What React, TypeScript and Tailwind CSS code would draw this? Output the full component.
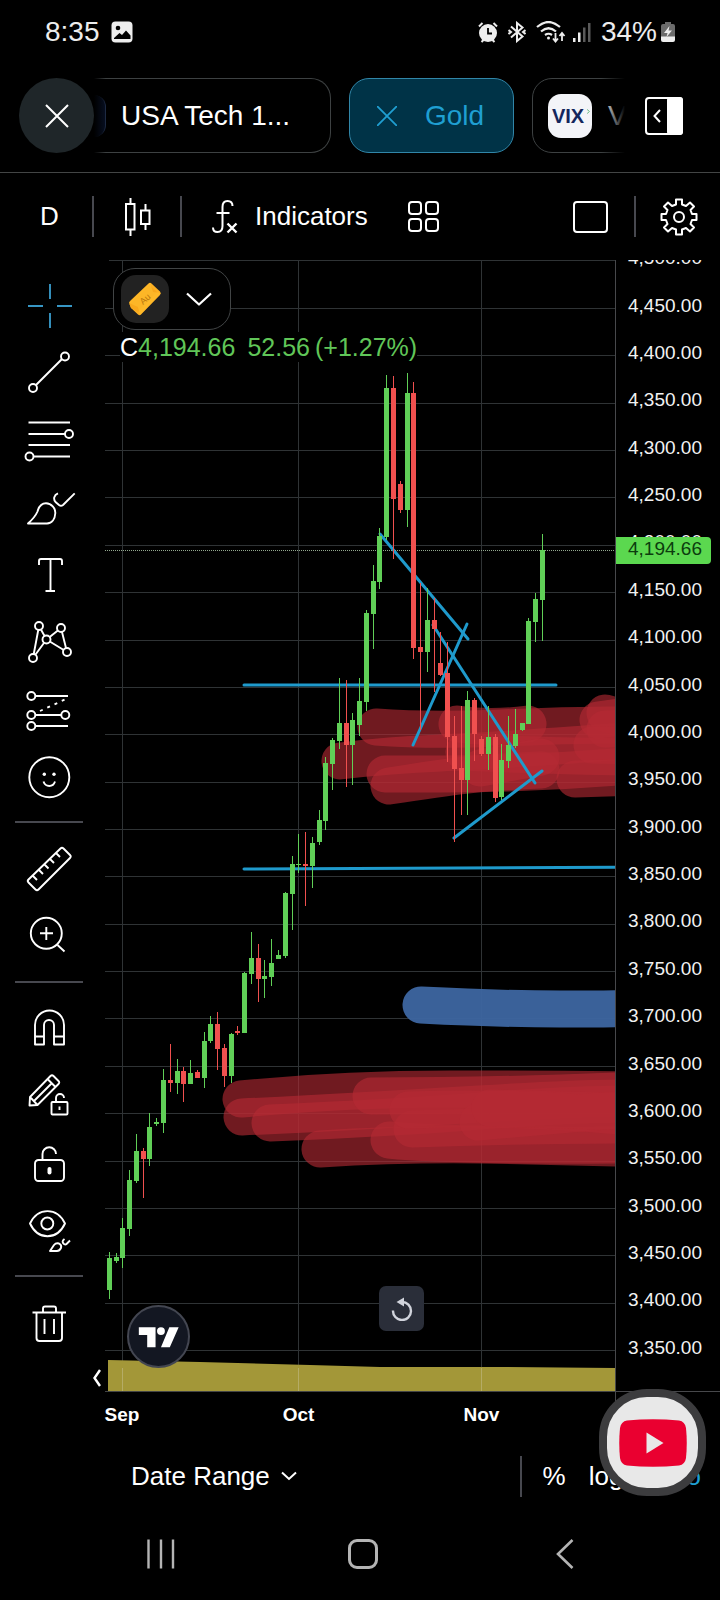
import type { ReactNode } from "react"
import { clsx } from "clsx"

type Candle = [x: number, open: number, close: number, high: number, low: number, up: 0 | 1]

// x centre, body top, body bottom, wick top, wick bottom, up/down
const candles: Candle[] = [
    [109, 1258, 1290, 1252, 1299, 1],
    [116, 1257, 1261, 1253, 1263, 1],
    [122, 1228, 1258, 1218, 1268, 1],
    [129, 1180, 1229, 1170, 1236, 1],
    [136, 1151, 1181, 1134, 1183, 1],
    [143, 1151, 1159, 1148, 1198, 0],
    [149, 1127, 1159, 1113, 1166, 1],
    [156, 1122, 1124, 1118, 1126, 1],
    [163, 1080, 1123, 1069, 1133, 1],
    [170, 1080, 1083, 1044, 1092, 0],
    [177, 1071, 1083, 1059, 1094, 1],
    [183, 1071, 1084, 1067, 1102, 0],
    [190, 1073, 1084, 1060, 1084, 1],
    [197, 1072, 1078, 1070, 1078, 0],
    [204, 1041, 1078, 1032, 1088, 1],
    [210, 1024, 1041, 1016, 1043, 1],
    [217, 1024, 1049, 1012, 1070, 0],
    [224, 1048, 1076, 1044, 1087, 0],
    [231, 1034, 1076, 1033, 1083, 1],
    [237, 1031, 1033, 1026, 1035, 0],
    [244, 973, 1033, 972, 1033, 1],
    [251, 958, 974, 932, 984, 1],
    [258, 958, 979, 944, 1002, 0],
    [264, 976, 979, 960, 998, 1],
    [271, 963, 977, 939, 986, 1],
    [278, 955, 959, 950, 959, 1],
    [285, 893, 956, 892, 958, 1],
    [292, 864, 894, 856, 930, 1],
    [298, 864, 865, 834, 873, 1],
    [305, 864, 866, 832, 906, 0],
    [312, 843, 866, 837, 888, 1],
    [319, 820, 842, 810, 845, 1],
    [325, 763, 821, 757, 830, 1],
    [332, 740, 764, 738, 790, 1],
    [339, 723, 741, 678, 749, 1],
    [346, 723, 745, 680, 787, 0],
    [352, 720, 745, 713, 785, 1],
    [359, 701, 725, 678, 736, 1],
    [366, 613, 702, 610, 711, 1],
    [373, 581, 614, 565, 649, 1],
    [379, 536, 582, 528, 589, 1],
    [386, 388, 537, 375, 540, 1],
    [393, 388, 499, 376, 559, 0],
    [400, 484, 510, 481, 513, 0],
    [407, 393, 510, 373, 527, 1],
    [413, 393, 648, 382, 659, 0],
    [420, 647, 652, 583, 730, 0],
    [427, 620, 652, 588, 672, 1],
    [434, 620, 629, 598, 692, 0],
    [440, 663, 675, 632, 676, 0],
    [447, 673, 737, 642, 762, 0],
    [454, 736, 769, 716, 842, 0],
    [461, 768, 780, 706, 815, 0],
    [467, 700, 780, 691, 815, 1],
    [474, 700, 734, 698, 761, 0],
    [481, 739, 754, 736, 756, 0],
    [488, 737, 754, 706, 770, 1],
    [495, 737, 798, 734, 802, 0],
    [501, 760, 797, 744, 800, 1],
    [508, 745, 761, 716, 768, 1],
    [515, 734, 746, 709, 748, 1],
    [522, 723, 730, 723, 731, 1],
    [528, 621, 724, 618, 724, 1],
    [535, 599, 622, 593, 642, 1],
    [542, 550, 600, 534, 641, 1],
]

const redZones = [
    "M376 727 Q430 731 500 728 T640 725",
    "M340 761 Q390 755 440 753 T640 740",
    "M385 774 H440 Q540 774 640 765",
    "M389 786 Q440 778 467 775 T541 770",
    "M464 752 Q540 756 640 757",
    "M457 724 Q490 729 528 724",
    "M480 768 L541 757",
    "M598 720 L640 714",
    "M605 713 L640 722",
    "M605 729 L640 727",
    "M592 745 L640 746",
    "M575 779 L640 777",
    "M241 1099 Q340 1089 450 1089 T640 1090",
    "M242 1117 Q350 1112 480 1104 T640 1099",
    "M270 1123 Q390 1118 480 1111 T640 1104",
    "M371 1096 Q500 1096 640 1090",
    "M320 1149 Q400 1144 480 1145 T640 1149",
    "M389 1140 Q450 1146 640 1145",
    "M412 1129 Q520 1125 640 1125",
    "M408 1110 Q520 1106 640 1118",
    "M478 1122 L640 1108",
    "M490 1108 L640 1112",
]

const trendLines = [
    "M244 685 L556 685",
    "M244 869 L640 867",
    "M380 534 L468 639",
    "M467 624 L413 745",
    "M433 625 L535 783",
    "M454 838 L542 771",
]

const GRID_TOP = 308
const GRID_BOTTOM = 1350
const gridRows = Array.from({ length: 23 }, (_, i) => Math.round(GRID_TOP + (i * (GRID_BOTTOM - GRID_TOP)) / 22))
const gridCols = [122, 298, 481]

const prices = Array.from({ length: 24 }, (_, i) =>
    (4500 - i * 50).toLocaleString("en-US", { minimumFractionDigits: 2 })
)

const Dot = ({ x, y }: { x: number; y: number }) => <circle cx={x} cy={y} r="4" fill="#000" />

const tools: { label: string; icon: ReactNode; blue?: boolean }[][] = [
    [
        { label: "Crosshair", blue: true, icon: <path d="M31 11V26M31 40V55M9 33H24M38 33H53" /> },
        { label: "Trend line", icon: <><path d="M14 48L46 16" /><Dot x={46} y={16.5} /><Dot x={14} y={48} /></> },
        {
            label: "Fib retracement",
            icon: <><path d="M9.500 15.500H51M9.500 27H50M9.500 38H51M10 49.500H51" /><Dot x={50} y={27} /><Dot x={10.5} y={49.5} /></>,
        },
        {
            label: "Brush",
            icon: (
                <path d="M9 49.500C14 45 17 41 18.500 37.500C20 32 23 29.300 27 29.300A9.500 9.500 0 0 1 36.300 39.300C36 45 33 49.300 28 49.500ZM39 19.300C35 21 34 25 36.500 28L40 31Q42 32.500 44 31L55.700 19.300" />
            ),
        },
        { label: "Text", icon: <path d="M20 24V20Q20 18 22 18H41Q43 18 43 20V24M31.500 18V50M26.500 50H36" /> },
        {
            label: "Patterns",
            icon: (
                <>
                    <path d="M14 50L20 18L27.500 31.500ZM27.500 31.500L42 20L48 44Z" />
                    <Dot x={20} y={18} /><Dot x={42} y={20} /><Dot x={27.5} y={31.5} /><Dot x={14} y={50} /><Dot x={48} y={44} />
                </>
            ),
        },
        {
            label: "Forecast",
            icon: (
                <>
                    <path d="M12 21H49M12 40H46M12 51H49" />
                    <path d="M21 36L47 24" strokeDasharray="3 5" />
                    <Dot x={12.3} y={21} /><Dot x={12.3} y={40} /><Dot x={46.3} y={40} /><Dot x={12.3} y={51} />
                </>
            ),
        },
        {
            label: "Emoji",
            icon: (
                <>
                    <circle cx="30.300" cy="35.300" r="20" />
                    <path d="M24.500 39.500Q26 44 30.300 44T36 39.500" />
                    <circle cx="25.300" cy="32.300" r="1.700" fill="#fff" stroke="none" />
                    <circle cx="35" cy="32.300" r="1.700" fill="#fff" stroke="none" />
                </>
            ),
        },
    ],
    [
        {
            label: "Measure",
            icon: (
                <path d="M41.500 13.500Q43 12 44.500 13.500L51 20Q52.500 21.500 51 23L19.500 54.500Q18 56 16.500 54.500L9.500 47.500Q8 46 9.500 44.500ZM14 41L18 45M20 35L24 39M25.500 29.500L29.500 33.500M31 24L35 28M37 18L41 22" />
            ),
        },
        {
            label: "Zoom in",
            icon: <><circle cx="27.300" cy="31.300" r="15.500" /><path d="M38.500 43L45.500 49.500M21 31.300H34M27.300 25V38" /></>,
        },
    ],
    [
        {
            label: "Magnet",
            icon: <path d="M16 49.500V30A14.500 14.500 0 0 1 45 30V49.500H35V30A5 5 0 0 0 25 30V49.500ZM16 41.500H25M35 41.500H45" />,
        },
        {
            label: "Keep drawing",
            icon: (
                <>
                    <path d="M10.500 43.500L11 35L31.500 14Q33 12.500 34.500 14L39.500 19Q41 20.500 39.500 22L18.500 43ZM11 35L18.500 43M28.500 17L36.500 25M15 39L32.500 21.500" />
                    <rect x="32.500" y="40" width="16" height="12.500" rx="1" />
                    <path d="M37 40V36A4 4 0 0 1 45 36M40.500 44.500V48" />
                </>
            ),
        },
        {
            label: "Lock drawings",
            icon: (
                <>
                    <rect x="16" y="31" width="29" height="21" rx="3.500" />
                    <path d="M23.500 31V25A6.500 6.500 0 0 1 37 25" />
                    <rect x="28.500" y="38" width="4" height="7.500" rx="2" fill="#fff" stroke="none" />
                </>
            ),
        },
        {
            label: "Hide drawings",
            icon: (
                <>
                    <path d="M11 27.500C19 11 38 11 46 27.500C38 44.500 19 44.500 11 27.500Z" />
                    <circle cx="28.300" cy="27.500" r="6" />
                    <path d="M31 55L35 49Q37 46.500 40 47.500Q43 49 42 52Q40.500 55 38 55ZM45.500 43Q42 45.500 45 48Q46.500 49 47.500 48L51 44.500" />
                </>
            ),
        },
    ],
    [
        {
            label: "Remove",
            icon: (
                <path d="M13.500 23.500H47M24 23V19.500Q24 17.500 26 17.500H35Q37 17.500 37 19.500V23M17.500 24V49Q17.500 52 20.500 52H40Q43 52 43 49V24M25.500 30V45M35 30V45" />
            ),
        },
    ],
]

function StatusBar() {
    return (
        <header className="flex h-[64px] items-center pl-[45px] pr-[45px] text-[28px] text-[#ededed]">
            <span>8:35</span>
            <svg viewBox="0 0 22 22" className="ml-[11px] size-[22px]">
                <rect x="0.500" y="0.500" width="21" height="21" rx="4" fill="#ededed" />
                <circle cx="7" cy="7" r="2.300" fill="#000" />
                <path d="M3 17L8.500 12L11 14L15 9.500L19.500 14.500V18H3Z" fill="#000" />
            </svg>

            <svg viewBox="0 0 20 22" className="ml-auto h-[22px] w-[20px]">
                <circle cx="10" cy="12" r="9" fill="#ededed" />
                <path d="M1 5.500L4.500 2M19 5.500L15.500 2M3.500 21L6 18.500M16.500 21L14 18.500" stroke="#ededed" strokeWidth="2" />
                <path d="M10 7V12.500H14" stroke="#000" strokeWidth="1.800" fill="none" />
            </svg>
            <svg viewBox="0 0 18 22" className="ml-[10px] h-[22px] w-[18px]" fill="none" stroke="#ededed" strokeWidth="2">
                <path d="M3 5.500L14.500 15.500L9 20V2L14.500 6.500L3 16.500M0.500 9L3 11L0.500 13M17.500 9L15 11L17.500 13" />
            </svg>
            <svg viewBox="0 0 30 22" className="ml-[10px] h-[22px] w-[30px]" fill="none" stroke="#ededed" strokeWidth="2.200">
                <path d="M1 6Q12.500 -4 24 6M5 10.500Q12.500 4 20 10.500M9 14Q12.500 11.500 16 14" />
                <circle cx="12.500" cy="17" r="1.500" fill="#ededed" stroke="none" />
                <path d="M19.500 12V20M17 17.500L19.500 20.500L22 17.500M26 20V12.500M23.500 15L26 12L28.500 15" strokeWidth="1.800" />
            </svg>
            <svg viewBox="0 0 19 22" className="ml-[6px] h-[22px] w-[19px]">
                <path d="M1 17H3.500V21H1ZM6 11.500H8.500V21H6Z" fill="#ededed" />
                <path d="M11 6.500H13.500V21H11ZM16 2H18.500V21H16Z" fill="#5a5a5a" />
            </svg>
            <span className="ml-[10px]">34%</span>
            <svg viewBox="0 0 14 20" className="ml-1 h-[20px] w-[14px]">
                <path d="M4 0H10V2H12Q14 2 14 4V15H0V4Q0 2 2 2H4Z" fill="#6b6b6b" />
                <path d="M0 14.500H14V18Q14 20 12 20H2Q0 20 0 18Z" fill="#ededed" />
                <path d="M8.500 4L3 11H6.500L5.500 15L11 8.500H7.500Z" fill="#ededed" />
            </svg>
        </header>
    )
}

function SymbolTabs() {
    return (
        <div className="flex h-[109px] items-start border-b border-[#434545] pl-[19px] pr-[37px] pt-[14px] text-[28px]">
            <button aria-label="Close" className="flex size-[75px] shrink-0 items-center justify-center rounded-full bg-[#1f2629]">
                <svg viewBox="0 0 24 24" className="size-[24px]" stroke="#fff" strokeWidth="2">
                    <path d="M1 1L23 23M23 1L1 23" />
                </svg>
            </button>

            <div className="relative mr-[20px] flex min-w-0 flex-1 gap-[18px] overflow-hidden">
                <button className="flex h-[75px] w-[237px] shrink-0 items-center rounded-r-[20px] border border-l-0 border-[#3d4142]">
                    <span className="h-[42px] w-[12px] rounded-r-[12px] border-r border-[#1f2c45] bg-[#070f22]" />
                    <span className="ml-[15px]">USA Tech 1...</span>
                </button>
                <button className="flex h-[75px] w-[165px] shrink-0 items-center rounded-[20px] border border-[#3186a8] bg-[#003347] text-[#1f9fd2]">
                    <svg viewBox="0 0 20 20" className="ml-[27px] size-[20px]" stroke="currentColor" strokeWidth="1.800">
                        <path d="M0 0L20 20M20 0L0 20" />
                    </svg>
                    <span className="ml-[28px]">Gold</span>
                </button>
                <button className="flex h-[75px] w-[170px] shrink-0 items-center rounded-[20px] border border-[#3d4142]">
                    <span className="relative ml-[15px] flex size-[44px] items-center justify-center rounded-[13px] bg-[#f3f4f8] pr-1 text-[20px] font-bold text-[#13265c]">
                        VIX
                        <svg viewBox="0 0 4 6" className="absolute right-[2px] top-[15px] h-[5px] w-[3px]" fill="none" stroke="#2aa34c">
                            <path d="M0 0L3 3L0 6" />
                        </svg>
                    </span>
                    <span className="ml-4">VIX</span>
                </button>
                <div className="pointer-events-none absolute inset-y-0 left-0 w-3 bg-gradient-to-r from-black to-transparent" />
                <div className="pointer-events-none absolute inset-y-0 right-0 w-6 bg-gradient-to-l from-black to-transparent" />
            </div>

            <button aria-label="Toggle panel" className="mt-[19px] shrink-0">
                <svg viewBox="0 0 38 38" className="size-[38px]" fill="none" stroke="#fff" strokeWidth="2">
                    <rect x="1" y="1" width="36" height="36" rx="3" />
                    <rect x="23" y="1" width="14" height="36" rx="2" fill="#fff" />
                    <path d="M15 13L9.500 19L15 25" />
                </svg>
            </button>
        </div>
    )
}

function ToolbarDivider() {
    return <span className="h-[41px] w-[2px] shrink-0 bg-[#47484f]" />
}

function Toolbar() {
    return (
        <div className="flex h-[87px] items-center text-[26px]">
            <button className="w-[92px] pl-[7px] text-center">D</button>
            <ToolbarDivider />
            <button aria-label="Chart type" className="flex w-[86px] justify-center pl-[2px]">
                <svg viewBox="0 0 26 38" className="h-[38px] w-[26px]" fill="none" stroke="#fff" strokeWidth="2">
                    <path d="M1 6H9.500V31.500H1ZM5.500 0V6M5.500 31.500V38M16 12.500H24.500V26H16ZM20.500 6V12.500M20.500 26V32" />
                </svg>
            </button>
            <ToolbarDivider />
            <button className="ml-[30px] flex items-center">
                <svg viewBox="0 0 26 34" className="mr-[17px] h-[34px] w-[26px]" fill="none" stroke="#fff" strokeWidth="2">
                    <path d="M20.500 6Q20.500 1 15.500 1Q10.500 1 10.500 7V26Q10.500 32 5.500 32Q1 32 1 27.500M4.500 13H17.500" />
                    <path d="M15.500 23.500L24.500 32.500M24.500 23.500L15.500 32.500" strokeWidth="2.400" />
                </svg>
                Indicators
            </button>
            <button aria-label="Templates" className="ml-[40px]">
                <svg viewBox="0 0 32 32" className="size-[32px]" fill="none" stroke="#fff" strokeWidth="2">
                    <rect x="1" y="1" width="12" height="12" rx="3" />
                    <rect x="18" y="1" width="12" height="12" rx="3" />
                    <rect x="1" y="18" width="12" height="12" rx="3" />
                    <rect x="18" y="18" width="12" height="12" rx="3" />
                </svg>
            </button>

            <button aria-label="Layout" className="ml-auto h-[32px] w-[35px] rounded-[4px] border-2 border-white" />
            <span className="w-[26px]" />
            <ToolbarDivider />
            <button aria-label="Settings" className="ml-[24px] mr-[22px]">
                <svg viewBox="0 0 38 38" className="size-[38px]" fill="none" stroke="#fff" strokeWidth="2" strokeLinejoin="round">
                    <path d="M16 1.500H22V6.500L26 8L30 4.500L34 8.500L30.500 12L32 16H36.500V22H32L30.500 26L34 29.500L30 33.500L26 30L22 31.500V36.500H16V31.500L12 30L8 33.500L4 29.500L7.500 26L6 22H1.500V16H6L7.500 12L4 8.500L8 4.500L12 8L16 6.500Z" />
                    <circle cx="19" cy="19" r="5" />
                </svg>
            </button>
        </div>
    )
}

function DrawingTools() {
    return (
        <aside className="flex w-[105px] shrink-0 flex-col pt-[13px]">
            {tools.map((group, i) => (
                <div key={i}>
                    {i > 0 && <div className="my-3 ml-[15px] h-[2px] w-[68px] bg-[#47484f]" />}
                    {group.map(({ label, icon, blue }) => (
                        <button key={label} aria-label={label} className="flex w-[98px] justify-center">
                            <svg
                                viewBox="0 0 60 67"
                                className={clsx("h-[67px] w-[60px]", blue ? "text-[#3796c4]" : "text-white")}
                                fill="none"
                                stroke="currentColor"
                                strokeWidth="1.900"
                                strokeLinejoin="round"
                            >
                                {icon}
                            </svg>
                        </button>
                    ))}
                </div>
            ))}
            <button aria-label="Hide toolbar" className="mr-1 mt-[13px] self-end">
                <svg viewBox="0 0 8 18" className="h-[18px] w-[8px]" fill="none" stroke="#fff" strokeWidth="2.400">
                    <path d="M7 1L1.500 9L7 17" />
                </svg>
            </button>
        </aside>
    )
}

function Chart() {
    return (
        <div className="relative min-w-0 flex-1">
            <svg viewBox="105 260 510 1131" className="block w-full" role="img" aria-label="Gold daily candles">
                <g fill="#2f3335" shapeRendering="crispEdges">
                    <rect x="109" y="260" width="506" height="1" />
                    {gridRows.map((y) => (
                        <rect key={y} x="105" y={y} width="510" height="1" />
                    ))}
                    {gridCols.map((x) => (
                        <rect key={x} x={x} y="260" width="1" height="1131" />
                    ))}
                </g>

                <g fill="none" stroke="#b42a34" strokeOpacity="0.620" strokeWidth="37" strokeLinecap="round">
                    {redZones.map((d) => (
                        <path key={d} d={d} />
                    ))}
                </g>
                <path
                    d="M421 1005Q500 1009 560 1009T640 1008"
                    fill="none"
                    stroke="#3c659f"
                    strokeOpacity="0.960"
                    strokeWidth="37"
                    strokeLinecap="round"
                />
                <path d="M108 1360L200 1362L310 1365L380 1367L500 1367L615 1368V1391H108Z" fill="#a39738" />
                {gridCols.map((x) => (
                    <rect key={x} x={x} y="1368" width="1" height="23" fill="#b5ac66" />
                ))}

                <g fill="none" stroke="#1f9acc" strokeWidth="3" strokeLinecap="round">
                    {trendLines.map((d) => (
                        <path key={d} d={d} />
                    ))}
                </g>

                <path d="M105 550.500H615" stroke="#93a88f" strokeDasharray="1 1" />

                <g shapeRendering="crispEdges">
                    {candles.map(([x, top, bottom, high, low, up]) => (
                        <g key={x} fill={up ? "#60cf57" : "#f0504f"}>
                            <rect x={x} y={high} width="1" height={low - high} />
                            <rect x={x - 2} y={top} width="5" height={bottom - top} />
                        </g>
                    ))}
                </g>
            </svg>

            <button
                aria-label="Gold symbol"
                className="absolute left-[8px] top-[8px] flex h-[62px] w-[118px] items-center rounded-[22px] border border-[#414445] bg-black pl-[7px]"
            >
                <span className="flex size-[48px] items-center justify-center rounded-[15px] bg-[#222222]">
                    <svg viewBox="0 0 34 34" className="size-[34px]">
                        <path d="M1.500 22Q0.500 20.500 2 19L20.500 1.500Q22 0 23.500 1.500L32 9.500Q33.500 11 32 13L13 32.500Q11.500 34 10 32.500L3 26Z" fill="#fdb022" />
                        <path d="M1.500 22L21.500 3L29 10L10 30L3 26Z" fill="#f8a81c" />
                        <path d="M22 1L25 10L33 11L12 33L10 25L1 21Z" fill="#ffc02e" opacity="0.600" />
                        <text x="12" y="21" fontSize="9" fill="#b9770d" transform="rotate(-42 16 18)">Au</text>
                    </svg>
                </span>
                <svg viewBox="0 0 26 14" className="ml-[17px] h-[14px] w-[26px]" fill="none" stroke="#fff" strokeWidth="2.200" strokeLinejoin="round">
                    <path d="M1 1.500L13 12.500L25 1.500" />
                </svg>
            </button>

            <div className="absolute left-[15px] top-[72px] flex bg-black text-[25px] leading-[30px] text-[#60c658]">
                <span className="text-white">C</span>
                <span>4,194.66</span>
                <span className="ml-3">52.56</span>
                <span className="ml-[5px]">(+1.27%)</span>
            </div>

            <a
                href="#tradingview"
                aria-label="TradingView"
                className="absolute bottom-[23px] left-[22px] size-[63px] rounded-full border-2 border-[#434651] bg-[#131722]"
            >
                <svg viewBox="0 0 60 60" className="size-[59px]" fill="#fff">
                    <path d="M10 20.500H27V41H18.500V28.500H10ZM41 20.500H50.500L41.500 41H32.500Z" />
                    <circle cx="32.500" cy="24.500" r="4" />
                </svg>
            </a>

            <button
                aria-label="Reset chart"
                className="absolute bottom-[60px] left-[274px] flex size-[45px] items-center justify-center rounded-[7px] bg-[#2a2e39]"
            >
                <svg viewBox="0 0 22 24" className="h-[24px] w-[22px]">
                    <path d="M2 13.500A9 9 0 1 0 11 5" fill="none" stroke="#d1d4dc" strokeWidth="2.400" />
                    <path d="M5.500 5L13 0.500V9.500Z" fill="#d1d4dc" />
                </svg>
            </button>
        </div>
    )
}

function PriceAxis() {
    return (
        <div className="relative flex w-[105px] shrink-0 overflow-hidden border-l border-[#47484b] text-[19px] leading-none text-[#f2f2f2]">
            <ul className="-mt-[26px] mb-[20px] flex flex-1 flex-col pl-[12px]">
                {prices.map((price) => (
                    <li key={price} className="flex min-h-0 flex-1 items-center">
                        {price}
                    </li>
                ))}
            </ul>
            <span className="absolute left-0 top-[277px] h-[27px] w-[95px] rounded-r-[4px] bg-[#5bd84f] pl-[12px] leading-[24px] text-[#0c3d0e]">
                4,194.66
            </span>
        </div>
    )
}

function TimeAxis() {
    return (
        <div className="relative flex h-[49px] pl-[105px] text-[19px] font-bold">
            <div className="grid flex-1 grid-cols-[34fr_319fr_47fr_110fr] items-center justify-items-center border-t border-[#434545] pb-[2px]">
                <span className="-mx-1">Sep</span>
                <span>Oct</span>
                <span className="-mx-1">Nov</span>
            </div>
            <div className="w-[105px] border-l border-t border-[#47484b]" />

            <button
                aria-label="YouTube"
                className="absolute -top-[2px] right-[14px] z-10 flex size-[107px] items-center justify-center rounded-[48px] border-8 border-[#3c3c3e] bg-[#e8e8e8]"
            >
                <svg viewBox="0 0 68 48" className="h-[48px] w-[68px]">
                    <path d="M8 1.500Q34 -1 60 1.500Q66 2.500 67 9Q68.500 24 67 39Q66 45.500 60 46.500Q34 49 8 46.500Q2 45.500 1 39Q-0.500 24 1 9Q2 2.500 8 1.500Z" fill="#ea0030" />
                    <path d="M27.500 13.500L44.500 24L27.500 34.500Z" fill="#e8e8e8" />
                </svg>
            </button>
        </div>
    )
}

function BottomBar() {
    return (
        <div className="flex h-[72px] items-center pl-[131px] pr-[19px] text-[26px]">
            <button className="flex items-center gap-[11px]">
                Date Range
                <svg viewBox="0 0 16 10" className="h-[10px] w-[16px]" fill="none" stroke="#fff" strokeWidth="2">
                    <path d="M1 1.500L8 8L15 1.500" />
                </svg>
            </button>
            <div className="ml-auto flex items-center">
                <ToolbarDivider />
                <button className="ml-[21px]">%</button>
                <button className="ml-[23px]">log</button>
                <button className="ml-[27px] text-[#1f9fd2]">auto</button>
            </div>
        </div>
    )
}

function SystemNav() {
    return (
        <nav className="grid h-[84px] grid-cols-3 place-items-center pl-[60px] pr-[54px]">
            <button aria-label="Recents">
                <svg viewBox="0 0 28 30" className="h-[30px] w-[28px]" stroke="#b4b4b4" strokeWidth="2.400">
                    <path d="M1.500 0.500V29.500M14 0.500V29.500M26 0.500V29.500" />
                </svg>
            </button>
            <button aria-label="Home" className="size-[30px] rounded-[9px] border-[3px] border-[#b4b4b4]" />
            <button aria-label="Back">
                <svg viewBox="0 0 18 30" className="h-[30px] w-[18px]" fill="none" stroke="#b4b4b4" strokeWidth="2.600">
                    <path d="M16.500 1L2 15L16.500 29" />
                </svg>
            </button>
        </nav>
    )
}

export default function App() {
    return (
        <div className="min-h-screen bg-black font-['Liberation_Sans',Arial,sans-serif] text-white">
            <StatusBar />
            <SymbolTabs />
            <Toolbar />
            <main className="flex">
                <DrawingTools />
                <Chart />
                <PriceAxis />
            </main>
            <TimeAxis />
            <BottomBar />
            <SystemNav />
        </div>
    )
}
